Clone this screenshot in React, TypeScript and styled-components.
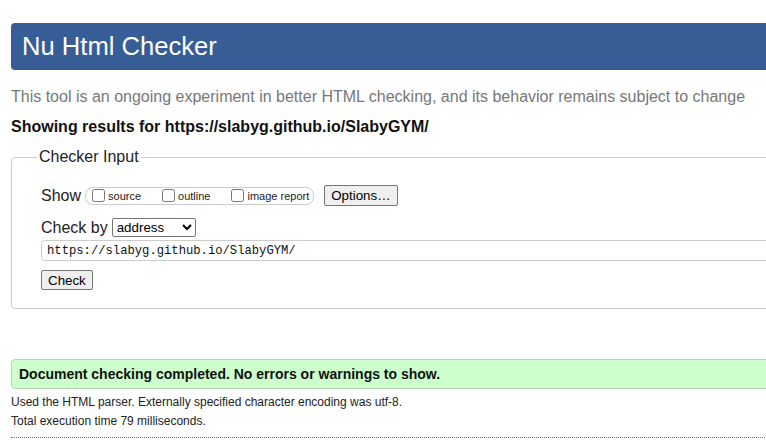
import React from "react";
import styled, { createGlobalStyle } from "styled-components";

const Global = createGlobalStyle`
  html, body { margin: 0; padding: 0; overflow: hidden; background: #fff; }
  body { font-family: "Liberation Sans", Arial, sans-serif; color: #111; }
`;

const Page = styled.div`
  width: 1100px;
  padding: 23px 0 0 11px;
  display: flex;
  flex-direction: column;
`;

const Header = styled.h1`
  margin: 0;
  height: 47px;
  line-height: 47px;
  padding: 0 11px;
  font-size: 25.6px;
  font-weight: normal;
  color: #fff;
  background: #365d95;
  border-radius: 4px;
`;

const Intro = styled.p`
  margin: 17px 0 0;
  font-size: 16px;
  line-height: 20px;
  color: #777;
`;

const Results = styled.p`
  margin: 10px 0 0;
  font-size: 16px;
  line-height: 20px;
  font-weight: bold;
  color: #111;
`;

const Fieldset = styled.fieldset`
  margin: 11px 0 0;
  padding: 19px 29px 18px;
  border: 1px solid #ccc;
  border-radius: 4px;
  display: flex;
  flex-direction: column;
  align-items: flex-start;
`;

const Legend = styled.legend`
  margin-left: -4px;
  padding: 0 2px;
  font-size: 16px;
  line-height: 18px;
  color: #222;
`;

const Row = styled.div<{ $mt?: number }>`
  display: flex;
  align-items: center;
  margin-top: ${(p) => p.$mt ?? 0}px;
  font-size: 16px;
`;

const RowLabel = styled.span`
  font-size: 16px;
  color: #222;
  margin-right: 4px;
`;

const CheckGroup = styled.span`
  display: inline-flex;
  align-items: center;
  height: 16px;
  border: 1px solid #ccc;
  border-radius: 8px;
  padding: 0 4px 0 2px;
  margin-right: 10px;
`;

const CheckLabel = styled.label<{ $last?: boolean }>`
  display: inline-flex;
  align-items: center;
  font-size: 11px;
  color: #222;
  margin-right: ${(p) => (p.$last ? 0 : 17)}px;
  input {
    width: 13px;
    height: 13px;
    margin: 0 3px 0 4px;
  }
`;

const Button = styled.button`
  font-family: "Liberation Sans", Arial, sans-serif;
  font-size: 13.33px;
  height: 21px;
  padding: 1px 6px;
  background: #efefef;
  border: 1px solid #767676;
  border-radius: 2px;
  color: #000;
`;

const Select = styled.select`
  font-family: "Liberation Sans", Arial, sans-serif;
  font-size: 13.33px;
  height: 19px;
  width: 84px;
  border: 1px solid #767676;
  border-radius: 2px;
  background: #fff;
  color: #000;
`;

const UrlInput = styled.input`
  margin-top: 3px;
  width: 1000px;
  height: 21px;
  box-sizing: border-box;
  border: 1px solid #ccc;
  border-radius: 4px;
  padding: 0 5px;
  font-family: "Liberation Mono", "DejaVu Sans Mono", monospace;
  font-size: 12.2px;
  color: #111;
`;

const CheckButton = styled(Button)`
  margin-top: 9px;
  height: 20px;
`;

const Success = styled.div`
  margin-top: 50px;
  height: 30px;
  box-sizing: border-box;
  border: 1px solid #b6d8b6;
  border-radius: 4px;
  background: #ccffcc;
  padding: 0 7px;
  display: flex;
  align-items: center;
  font-size: 14px;
  font-weight: bold;
  color: #111;
`;

const Notes = styled.div`
  margin-top: 4px;
  display: flex;
  flex-direction: column;
`;

const Note = styled.p`
  margin: 0;
  font-size: 12px;
  line-height: 19px;
  color: #222;
`;

const Rule = styled.div`
  margin-top: 6px;
  border-bottom: 1px dotted #777;
`;

export default function App() {
  return (
    <>
      <Global />
      <Page>
        <Header>Nu Html Checker</Header>
        <Intro>
          This tool is an ongoing experiment in better HTML checking, and its behavior remains subject to change
        </Intro>
        <Results>Showing results for https://slabyg.github.io/SlabyGYM/</Results>
        <Fieldset>
          <Legend>Checker Input</Legend>
          <Row>
            <RowLabel>Show</RowLabel>
            <CheckGroup>
              <CheckLabel>
                <input type="checkbox" />
                source
              </CheckLabel>
              <CheckLabel>
                <input type="checkbox" />
                outline
              </CheckLabel>
              <CheckLabel $last>
                <input type="checkbox" />
                image report
              </CheckLabel>
            </CheckGroup>
            <Button>Options…</Button>
          </Row>
          <Row $mt={12}>
            <RowLabel>Check by</RowLabel>
            <Select defaultValue="address">
              <option value="address">address</option>
              <option value="file">file upload</option>
              <option value="text">text input</option>
            </Select>
          </Row>
          <UrlInput defaultValue="https://slabyg.github.io/SlabyGYM/" />
          <CheckButton>Check</CheckButton>
        </Fieldset>
        <Success>Document checking completed. No errors or warnings to show.</Success>
        <Notes>
          <Note>Used the HTML parser. Externally specified character encoding was utf-8.</Note>
          <Note>Total execution time 79 milliseconds.</Note>
          <Rule />
        </Notes>
      </Page>
    </>
  );
}
